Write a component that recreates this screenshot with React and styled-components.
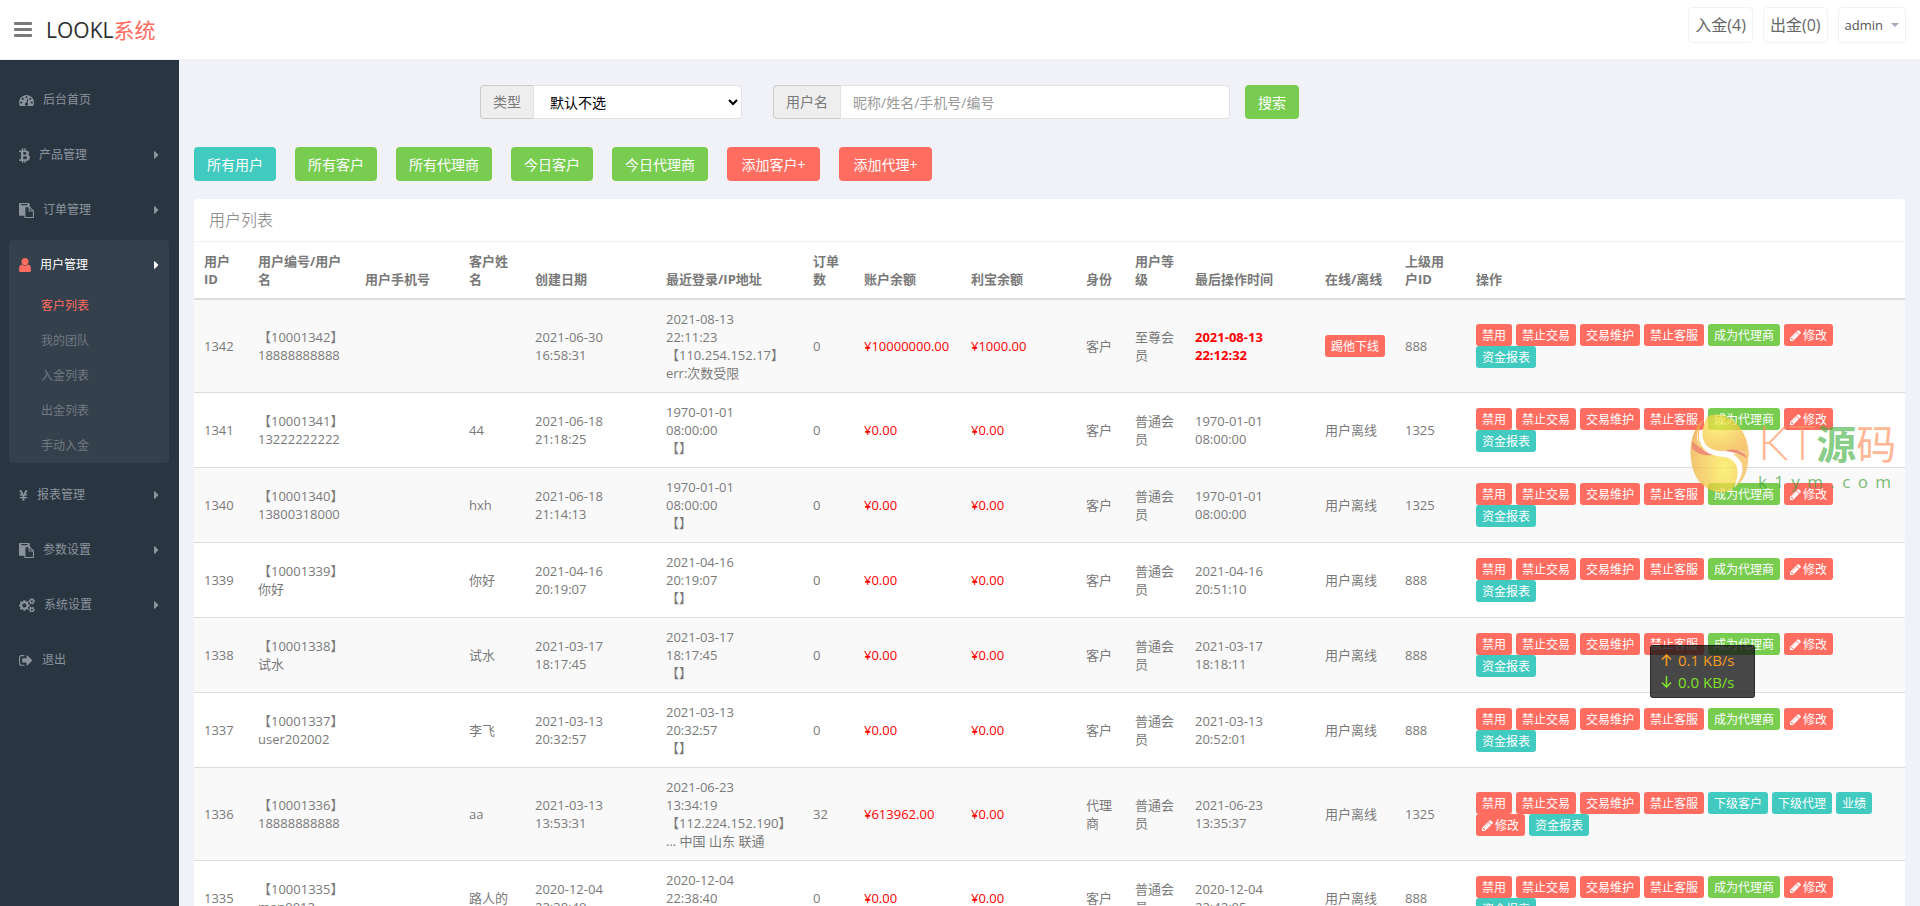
import React from "react";
import styled, { createGlobalStyle, css } from "styled-components";
import { FaBtc, FaCaretRight, FaYenSign } from "react-icons/fa";

const menu = [
  { label: "后台首页", icon: "dashboard" },
  { label: "产品管理", icon: "btc", more: true },
  { label: "订单管理", icon: "paste", more: true },
  {
    label: "用户管理",
    icon: "user",
    more: true,
    children: ["客户列表", "我的团队", "入金列表", "出金列表", "手动入金"],
  },
  { label: "报表管理", icon: "yen", more: true },
  { label: "参数设置", icon: "paste", more: true },
  { label: "系统设置", icon: "cogs", more: true },
  { label: "退出", icon: "signOut" },
];

const filters = [
  { label: "所有用户", tone: "info" },
  { label: "所有客户", tone: "success" },
  { label: "所有代理商", tone: "success" },
  { label: "今日客户", tone: "success" },
  { label: "今日代理商", tone: "success" },
  { label: "添加客户+", tone: "danger", wide: true },
  { label: "添加代理+", tone: "danger", wide: true },
];

const columns = [
  { title: "用户ID", width: 54 },
  { title: "用户编号/用户名", width: 107 },
  { title: "用户手机号", width: 104 },
  { title: "客户姓名", width: 66 },
  { title: "创建日期", width: 131 },
  { title: "最近登录/IP地址", width: 147 },
  { title: "订单数", width: 51 },
  { title: "账户余额", width: 107 },
  { title: "利宝余额", width: 115 },
  { title: "身份", width: 49 },
  { title: "用户等级", width: 60 },
  { title: "最后操作时间", width: 130 },
  { title: "在线/离线", width: 80 },
  { title: "上级用户ID", width: 71 },
  { title: "操作" },
];

const baseActions = [
  { label: "禁用", tone: "danger" },
  { label: "禁止交易", tone: "danger" },
  { label: "交易维护", tone: "danger" },
  { label: "禁止客服", tone: "danger" },
];

const tailActions = [
  { label: "修改", tone: "danger", icon: true },
  { label: "资金报表", tone: "info" },
];

const customerActions = [
  ...baseActions,
  { label: "成为代理商", tone: "success" },
  ...tailActions,
];

const agentActions = [
  ...baseActions,
  { label: "下级客户", tone: "info" },
  { label: "下级代理", tone: "info" },
  { label: "业绩", tone: "info" },
  ...tailActions,
];

const users = [
  {
    id: "1342",
    account: ["【10001342】", "18888888888"],
    name: "",
    created: ["2021-06-30", "16:58:31"],
    login: ["2021-08-13", "22:11:23", "【110.254.152.17】", "err:次数受限"],
    orders: "0",
    balance: "¥10000000.00",
    treasure: "¥1000.00",
    role: "客户",
    level: "至尊会员",
    last: ["2021-08-13", "22:12:32"],
    online: true,
    parent: "888",
  },
  {
    id: "1341",
    account: ["【10001341】", "13222222222"],
    name: "44",
    created: ["2021-06-18", "21:18:25"],
    login: ["1970-01-01", "08:00:00", "【】"],
    orders: "0",
    balance: "¥0.00",
    treasure: "¥0.00",
    role: "客户",
    level: "普通会员",
    last: ["1970-01-01", "08:00:00"],
    parent: "1325",
  },
  {
    id: "1340",
    account: ["【10001340】", "13800318000"],
    name: "hxh",
    created: ["2021-06-18", "21:14:13"],
    login: ["1970-01-01", "08:00:00", "【】"],
    orders: "0",
    balance: "¥0.00",
    treasure: "¥0.00",
    role: "客户",
    level: "普通会员",
    last: ["1970-01-01", "08:00:00"],
    parent: "1325",
  },
  {
    id: "1339",
    account: ["【10001339】", "你好"],
    name: "你好",
    created: ["2021-04-16", "20:19:07"],
    login: ["2021-04-16", "20:19:07", "【】"],
    orders: "0",
    balance: "¥0.00",
    treasure: "¥0.00",
    role: "客户",
    level: "普通会员",
    last: ["2021-04-16", "20:51:10"],
    parent: "888",
  },
  {
    id: "1338",
    account: ["【10001338】", "试水"],
    name: "试水",
    created: ["2021-03-17", "18:17:45"],
    login: ["2021-03-17", "18:17:45", "【】"],
    orders: "0",
    balance: "¥0.00",
    treasure: "¥0.00",
    role: "客户",
    level: "普通会员",
    last: ["2021-03-17", "18:18:11"],
    parent: "888",
  },
  {
    id: "1337",
    account: ["【10001337】", "user202002"],
    name: "李飞",
    created: ["2021-03-13", "20:32:57"],
    login: ["2021-03-13", "20:32:57", "【】"],
    orders: "0",
    balance: "¥0.00",
    treasure: "¥0.00",
    role: "客户",
    level: "普通会员",
    last: ["2021-03-13", "20:52:01"],
    parent: "888",
  },
  {
    id: "1336",
    account: ["【10001336】", "18888888888"],
    name: "aa",
    created: ["2021-03-13", "13:53:31"],
    login: ["2021-06-23", "13:34:19", "【112.224.152.190】", "... 中国 山东 联通"],
    orders: "32",
    balance: "¥613962.00",
    treasure: "¥0.00",
    role: "代理商",
    level: "普通会员",
    last: ["2021-06-23", "13:35:37"],
    parent: "1325",
    agent: true,
  },
  {
    id: "1335",
    account: ["【10001335】", "man0912"],
    name: "路人的",
    created: ["2020-12-04", "22:38:40"],
    login: ["2020-12-04", "22:38:40", "【】"],
    orders: "0",
    balance: "¥0.00",
    treasure: "¥0.00",
    role: "客户",
    level: "普通会员",
    last: ["2020-12-04", "22:42:05"],
    parent: "888",
  },
];

const glyphs = {
  dashboard: {
    box: "0 128 1792 1536",
    width: 15,
    d: "M384 1152q0-53-37.5-90.5t-90.5-37.5-90.5 37.5-37.5 90.5 37.5 90.5 90.5 37.5 90.5-37.5 37.5-90.5zm192-448q0-53-37.5-90.5t-90.5-37.5-90.5 37.5-37.5 90.5 37.5 90.5 90.5 37.5 90.5-37.5 37.5-90.5zm428 481l101-382q6-26-7.5-48.5t-38.5-29.5-48 6.5-30 39.5l-101 382q-60 5-107 43.5t-63 98.5q-20 77 20 146t117 89 146-20 89-117q16-60-6-117t-72-91zm660-33q0-53-37.5-90.5t-90.5-37.5-90.5 37.5-37.5 90.5 37.5 90.5 90.5 37.5 90.5-37.5 37.5-90.5zm-640-640q0-53-37.5-90.5t-90.5-37.5-90.5 37.5-37.5 90.5 37.5 90.5 90.5 37.5 90.5-37.5 37.5-90.5zm448 192q0-53-37.5-90.5t-90.5-37.5-90.5 37.5-37.5 90.5 37.5 90.5 90.5 37.5 90.5-37.5 37.5-90.5zm320 448q0 261-141 483-19 29-54 29h-1402q-35 0-54-29-141-221-141-483 0-182 71-348t191-286 286-191 348-71 348 71 286 191 191 286 71 348z",
  },
  paste: {
    box: "0 0 1792 1792",
    width: 15,
    d: "M768 1664h896v-640h-416q-40 0-68-28t-28-68v-416h-384v1152zm256-1440v-64q0-13-9.5-22.5t-22.5-9.5h-704q-13 0-22.5 9.5t-9.5 22.5v64q0 13 9.5 22.5t22.5 9.5h704q13 0 22.5-9.5t9.5-22.5zm256 672h299l-299-299v299zm512 128v672q0 40-28 68t-68 28h-960q-40 0-68-28t-28-68v-160h-544q-40 0-68-28t-28-68v-1344q0-40 28-68t68-28h1088q40 0 68 28t28 68v328q21 13 36 28l408 408q28 28 48 76t20 88z",
  },
  user: {
    box: "0 128 1280 1536",
    width: 12,
    d: "M1280 1399q0 109-62.5 187t-150.5 78h-854q-88 0-150.5-78t-62.5-187q0-85 8.5-160.5t31.5-152 58.5-131 94-89 134.5-34.5q131 128 313 128t313-128q76 0 134.5 34.5t94 89 58.5 131 31.5 152 8.5 160.5zm-256-887q0 159-112.5 271.5t-271.5 112.5-271.5-112.5-112.5-271.5 112.5-271.5 271.5-112.5 271.5 112.5 112.5 271.5z",
  },
  cogs: {
    box: "0 0 1920 1792",
    width: 16,
    d: "M896 896q0-106-75-181t-181-75-181 75-75 181 75 181 181 75 181-75 75-181zm768 512q0-52-38-90t-90-38-90 38-38 90q0 53 37.5 90.5t90.5 37.5 90.5-37.5 37.5-90.5zm0-1024q0-52-38-90t-90-38-90 38-38 90q0 53 37.5 90.5t90.5 37.5 90.5-37.5 37.5-90.5zm-384 421v185q0 10-7 19.5t-16 10.5l-155 24q-11 35-32 76 34 48 90 115 7 11 7 20 0 12-7 19-23 30-82.5 89.5t-78.5 59.5q-11 0-21-7l-115-90q-37 19-77 31-11 108-23 155-7 24-30 24h-186q-11 0-20-7.5t-10-17.5l-23-153q-34-10-75-31l-118 89q-7 7-20 7-11 0-21-8-144-133-144-160 0-9 7-19 10-14 41-53t47-61q-23-44-35-82l-152-24q-10-1-17-9.5t-7-19.5v-185q0-10 7-19.5t16-10.5l155-24q11-35 32-76-34-48-90-115-7-11-7-20 0-12 7-20 22-30 82-89t79-59q11 0 21 7l115 90q34-18 77-32 11-108 23-154 7-24 30-24h186q11 0 20 7.5t10 17.5l23 153q34 10 75 31l118-89q8-7 20-7 11 0 21 8 144 133 144 160 0 8-7 19-12 16-42 54t-45 60q23 48 34 82l152 23q10 2 17 10.5t7 19.5zm640 533v140q0 16-149 31-12 27-30 52 51 113 51 138 0 4-4 7-122 71-124 71-8 0-46-47t-52-68q-20 2-30 2t-30-2q-14 21-52 68t-46 47q-2 0-124-71-4-3-4-7 0-25 51-138-18-25-30-52-149-15-149-31v-140q0-16 149-31 13-29 30-52-51-113-51-138 0-4 4-7 4-2 35-20t59-34 30-16q8 0 46 46.5t52 67.5q20-2 30-2t30 2q51-71 92-112l6-2q4 0 124 70 4 3 4 7 0 25-51 138 17 23 30 52 149 15 149 31zm0-1024v140q0 16-149 31-12 27-30 52 51 113 51 138 0 4-4 7-122 71-124 71-8 0-46-47t-52-68q-20 2-30 2t-30-2q-14 21-52 68t-46 47q-2 0-124-71-4-3-4-7 0-25 51-138-18-25-30-52-149-15-149-31v-140q0-16 149-31 13-29 30-52-51-113-51-138 0-4 4-7 4-2 35-20t59-34 30-16q8 0 46 46.5t52 67.5q20-2 30-2t30 2q51-71 92-112l6-2q4 0 124 70 4 3 4 7 0 25-51 138 17 23 30 52 149 15 149 31z",
  },
  signOut: {
    box: "0 128 1664 1536",
    width: 14,
    d: "M640 1440q0 4 1 20t.5 26.5-3 23.5-10 19.5-20.5 6.5h-320q-119 0-203.5-84.5t-84.5-203.5v-704q0-119 84.5-203.5t203.5-84.5h320q13 0 22.5 9.5t9.5 22.5q0 4 1 20t.5 26.5-3 23.5-10 19.5-20.5 6.5h-320q-66 0-113 47t-47 113v704q0 66 47 113t113 47h312l11.5 1 11.5 3 8 5.5 7 9 2 13.5zm928-544q0 26-19 45l-544 544q-19 19-45 19t-45-19-19-45v-288h-448q-26 0-45-19t-19-45v-384q0-26 19-45t45-19h448v-288q0-26 19-45t45-19 45 19l544 544q19 19 19 45z",
  },
  pencil: {
    box: "0 128 1536 1536",
    width: 11,
    d: "M363 1536l91-91-235-235-91 91v107h128v128h107zm523-928q0-22-22-22-10 0-17 7l-542 542q-7 7-7 17 0 22 22 22 10 0 17-7l542-542q7-7 7-17zm-54-192l416 416-832 832h-416v-416zm683 96q0 53-37 90l-166 166-416-416 166-165q36-38 90-38 53 0 91 38l235 234q37 39 37 91z",
  },
};

function Glyph({ name }) {
  if (name === "btc") return <BtcIcon />;
  if (name === "yen") return <YenIcon />;
  const { box, width, d } = glyphs[name];
  return (
    <svg viewBox={box} width={width} fill="currentColor" aria-hidden="true">
      <path d={d} />
    </svg>
  );
}

function Lines({ items }) {
  return items.map((line, i) => (
    <React.Fragment key={i}>
      {i > 0 && <br />}
      {line}
    </React.Fragment>
  ));
}

function Sidebar() {
  return (
    <Aside>
      {menu.map((item) => (
        <MenuGroup key={item.label} $open={!!item.children}>
          <MenuLink href="#" $active={!!item.children}>
            <Glyph name={item.icon} />
            <span>{item.label}</span>
            {item.more && <Caret />}
          </MenuLink>
          {item.children &&
            item.children.map((child, i) => (
              <SubLink href="#" key={child} $active={i === 0}>
                {child}
              </SubLink>
            ))}
        </MenuGroup>
      ))}
    </Aside>
  );
}

function UserRow({ user }) {
  const actions = user.agent ? agentActions : customerActions;
  return (
    <tr>
      <Td>{user.id}</Td>
      <Td>
        <Lines items={user.account} />
      </Td>
      <Td />
      <Td>{user.name}</Td>
      <Td>
        <Lines items={user.created} />
      </Td>
      <Td>
        <Lines items={user.login} />
      </Td>
      <Td>{user.orders}</Td>
      <Td $red>{user.balance}</Td>
      <Td $red>{user.treasure}</Td>
      <Td>{user.role}</Td>
      <Td>{user.level}</Td>
      <Td $red={user.online} $bold={user.online}>
        <Lines items={user.last} />
      </Td>
      <Td>
        {user.online ? <SmallButton $tone="danger">踢他下线</SmallButton> : "用户离线"}
      </Td>
      <Td>{user.parent}</Td>
      <Td>
        <Actions>
          {actions.map((action) => (
            <SmallButton key={action.label} $tone={action.tone}>
              {action.icon && <Glyph name="pencil" />}
              {action.label}
            </SmallButton>
          ))}
        </Actions>
      </Td>
    </tr>
  );
}

function Watermark() {
  return (
    <Mark>
      <svg width="60" height="80" viewBox="0 0 60 80" aria-hidden="true">
        <defs>
          <radialGradient id="top" cx="0.35" cy="0.25" r="0.75">
            <stop offset="0" stopColor="#fbee4c" />
            <stop offset="1" stopColor="#f3ad3c" />
          </radialGradient>
          <radialGradient id="bottom" cx="0.7" cy="0.7" r="0.8">
            <stop offset="0" stopColor="#fbee4c" />
            <stop offset="1" stopColor="#f0a53c" />
          </radialGradient>
        </defs>
        <g opacity="0.72">
          <path
            d="M17 4C34-5 59 12 59 44C52 36 46 37 32 38C16 38 6 26 17 4Z"
            fill="url(#top)"
          />
          <path
            d="M12 8C-2 20-3 50 8 67C20 83 38 80 42 76C55 58 50 45 34 43C12 42 4 28 12 8Z"
            fill="url(#bottom)"
          />
          <path d="M54 21C62 43 59 66 44 75C57 57 54 49 43 41C54 40 60 40 54 21Z" fill="#f3bd50" />
          <path d="M2 35C7 42 18 44 28 41C18 40 10 36 2 28Z" fill="#e8663f" />
          <path d="M35 38C43 35 52 36 58 46C51 41 44 39 35 38Z" fill="#e8663f" />
        </g>
        <path
          d="M16 5C7 12 3 28 13 36C22 43 37 39 46 44C55 51 53 64 44 75C51 58 48 47 35 44C19 43 9 37 8 26C7 16 10 9 16 5Z"
          fill="#ffffff"
        />
      </svg>
      <MarkText>
        <MarkTitle>
          <MarkLatin>KT</MarkLatin>
          <span>
            <em>源</em>码
          </span>
        </MarkTitle>
        <MarkDomain>
          {"k1ym.com".split("").map((letter, i) => (
            <span key={i}>{letter}</span>
          ))}
        </MarkDomain>
      </MarkText>
    </Mark>
  );
}

function SpeedArrow({ down }) {
  return (
    <svg width="11" height="12" viewBox="0 0 11 12" fill="none" stroke="currentColor" strokeWidth="1.6">
      {down ? <path d="M5.500 0V11M1 6.500l4.500 4.500 4.500-4.500" /> : <path d="M5.500 12V1M1 5.500l4.500-4.500 4.500 4.500" />}
    </svg>
  );
}

export default function App() {
  return (
    <Page>
      <GlobalStyle />
      <Header>
        <ToggleButton aria-label="菜单">
          <svg width="18" height="15" viewBox="0 0 18 15" fill="currentColor">
            <rect y="0" width="18" height="3" rx="1" />
            <rect y="6" width="18" height="3" rx="1" />
            <rect y="12" width="18" height="3" rx="1" />
          </svg>
        </ToggleButton>
        <Logo href="#">
          LOOKL<span>系统</span>
        </Logo>
        <HeaderNav>
          <HeaderLink href="#">入金(4)</HeaderLink>
          <HeaderLink href="#">出金(0)</HeaderLink>
          <UserButton>
            admin
            <DownCaret />
          </UserButton>
        </HeaderNav>
      </Header>
      <Body>
        <Sidebar />
        <Main>
          <SearchForm onSubmit={(e) => e.preventDefault()}>
            <TypeGroup>
              <Addon htmlFor="type">类型</Addon>
              <Select id="type">
                <option>默认不选</option>
              </Select>
            </TypeGroup>
            <NameGroup>
              <Addon htmlFor="username">用户名</Addon>
              <Input id="username" type="text" placeholder="昵称/姓名/手机号/编号" />
            </NameGroup>
            <Button type="submit" $tone="success">
              搜索
            </Button>
          </SearchForm>
          <Filters>
            {filters.map((item) => (
              <Button key={item.label} $tone={item.tone} $wide={item.wide}>
                {item.label}
              </Button>
            ))}
          </Filters>
          <Panel>
            <PanelTitle>用户列表</PanelTitle>
            <Table>
              <colgroup>
                {columns.map((col) => (
                  <col key={col.title} width={col.width} />
                ))}
              </colgroup>
              <thead>
                <tr>
                  {columns.map((col) => (
                    <Th key={col.title}>{col.title}</Th>
                  ))}
                </tr>
              </thead>
              <tbody>
                {users.map((user) => (
                  <UserRow key={user.id} user={user} />
                ))}
              </tbody>
            </Table>
          </Panel>
        </Main>
      </Body>
      <Watermark />
      <SpeedWidget>
        <Speed $color="#f39c1f">
          <SpeedArrow />
          0.1 KB/s
        </Speed>
        <Speed $color="#7fe02b">
          <SpeedArrow down />
          0.0 KB/s
        </Speed>
      </SpeedWidget>
    </Page>
  );
}

const tones = {
  info: "#41cac0",
  success: "#78cd51",
  danger: "#ff6c60",
};

const GlobalStyle = createGlobalStyle`
  * {
    box-sizing: border-box;
  }

  body {
    margin: 0;
    background: #f1f2f7;
    color: #797979;
    font-family: "Open Sans", "Noto Sans CJK SC", sans-serif;
    font-size: 13px;
    line-height: 18px;
  }

  button,
  input,
  select {
    font-family: inherit;
  }

  a {
    text-decoration: none;
  }
`;

const Page = styled.div`
  display: flex;
  flex-direction: column;
  height: 100vh;
  overflow: hidden;
  position: relative;
`;

const Header = styled.header`
  display: flex;
  align-items: center;
  flex: none;
  height: 60px;
  padding: 0 14px;
  background: #fff;
  border-bottom: 1px solid #f1f2f7;
`;

const ToggleButton = styled.button`
  display: flex;
  padding: 0;
  border: 0;
  background: none;
  color: #797979;
  cursor: pointer;
`;

const Logo = styled.a`
  margin-left: 14px;
  color: #2e2e2e;
  font-size: 21px;
  line-height: 30px;

  span {
    color: #ff6c60;
  }
`;

const HeaderNav = styled.nav`
  display: flex;
  gap: 10px;
  margin-left: auto;
  margin-bottom: 9px;
`;

const headerBox = css`
  display: flex;
  align-items: center;
  height: 36px;
  padding: 0 6px;
  border: 1px solid #f1f2f7;
  border-radius: 4px;
  background: #fff;
`;

const HeaderLink = styled.a`
  ${headerBox}
  color: #666;
  font-size: 16px;
`;

const UserButton = styled.button`
  ${headerBox}
  gap: 8px;
  color: #555;
  font-size: 13px;
  cursor: pointer;
`;

const DownCaret = styled.span`
  border: 4px solid transparent;
  border-top-color: #a4aaba;
  border-bottom: 0;
`;

const Body = styled.div`
  display: flex;
  flex: 1;
  min-height: 0;
`;

const Aside = styled.aside`
  display: flex;
  flex-direction: column;
  flex: none;
  gap: 7px;
  width: 179px;
  padding: 15px 10px 15px 9px;
  background: #2a3542;
`;

const MenuGroup = styled.div`
  border-radius: 4px;
  background: ${(props) => (props.$open ? "#35404d" : "none")};
`;

const MenuLink = styled.a`
  display: flex;
  align-items: center;
  gap: 9px;
  height: 48px;
  padding: 2px 10px 0;
  color: ${(props) => (props.$active ? "#fff" : "#8b949d")};
  font-size: 12px;

  > svg:first-child {
    color: ${(props) => (props.$active ? "#ff6c60" : "inherit")};
  }
`;

const BtcIcon = styled(FaBtc)`
  width: 11px;
  height: 15px;
`;

const YenIcon = styled(FaYenSign)`
  width: 9px;
  height: 13px;
`;

const Caret = styled(FaCaretRight)`
  width: 5px;
  height: 14px;
  margin-left: auto;
`;

const SubLink = styled.a`
  display: block;
  padding-left: 32px;
  color: ${(props) => (props.$active ? "#ff6c60" : "#717a83")};
  font-size: 12px;
  line-height: 35px;
`;

const Main = styled.main`
  flex: 1;
  min-width: 0;
  padding: 25px 15px 0;
  overflow-y: auto;
  scrollbar-width: none;
`;

const SearchForm = styled.form`
  display: flex;
  padding-left: 286px;
`;

const TypeGroup = styled.div`
  display: flex;
  flex: 0 1 262px;
  margin-right: 31px;
`;

const NameGroup = styled.div`
  display: flex;
  flex: 0 1 457px;
  margin-right: 15px;
`;

const Addon = styled.label`
  flex: none;
  height: 34px;
  padding: 0 12px;
  border: 1px solid #ccc;
  border-right: 0;
  border-radius: 4px 0 0 4px;
  background: #eee;
  font-size: 14px;
  line-height: 32px;
`;

const control = css`
  flex: 1;
  min-width: 0;
  height: 34px;
  border: 1px solid #e2e2e4;
  border-radius: 0 4px 4px 0;
  background: #fff;
  font-size: 14px;
`;

const Select = styled.select`
  ${control}
  padding: 0 0 0 12px;
  color: #000;
`;

const Input = styled.input`
  ${control}
  padding: 0 12px;
  color: #555;

  &::placeholder {
    color: #999;
  }
`;

const Button = styled.button`
  height: 34px;
  min-width: ${(props) => (props.$wide ? "93px" : "0")};
  padding: 0 13px;
  border: 0;
  border-radius: 4px;
  background: ${(props) => tones[props.$tone]};
  color: #fff;
  font-size: 14px;
  white-space: nowrap;
  cursor: pointer;
`;

const Filters = styled.div`
  display: flex;
  flex-wrap: wrap;
  gap: 19px;
  margin: 28px 0 18px;
`;

const Panel = styled.section`
  border-radius: 4px;
  background: #fff;
`;

const PanelTitle = styled.h2`
  margin: 0;
  padding: 10px 15px;
  border-bottom: 1px solid #eff2f7;
  font-size: 16px;
  font-weight: 300;
  line-height: 22px;
`;

const Table = styled.table`
  width: 100%;
  table-layout: fixed;
  border-collapse: separate;
  border-spacing: 0;

  tbody tr:nth-child(odd) {
    background: #f9f9f9;
  }
`;

const Th = styled.th`
  padding: 10px;
  border-bottom: 2px solid #ddd;
  text-align: left;
  vertical-align: bottom;
`;

const Td = styled.td`
  padding: 10px;
  border-bottom: 1px solid #ddd;
  color: ${(props) => (props.$red ? "red" : "inherit")};
  font-weight: ${(props) => (props.$bold ? 700 : 400)};

  &:last-child {
    padding-right: 20px;
  }
`;

const Actions = styled.div`
  display: flex;
  flex-wrap: wrap;
  gap: 0 4px;
`;

const SmallButton = styled.button`
  display: flex;
  align-items: center;
  gap: 2px;
  height: 22px;
  padding: 0 6px;
  border: 0;
  border-radius: 3px;
  background: ${(props) => tones[props.$tone]};
  color: #fff;
  font-size: 12px;
  white-space: nowrap;
  cursor: pointer;
`;

const Mark = styled.div`
  position: absolute;
  top: 413px;
  right: 29px;
  display: flex;
  gap: 8px;
  pointer-events: none;
`;

const MarkText = styled.div`
  display: flex;
  flex-direction: column;
  width: 133px;
`;

const MarkTitle = styled.div`
  display: flex;
  justify-content: space-between;
  color: rgba(255, 150, 100, 0.7);
  font-family: "Noto Sans CJK SC", sans-serif;
  font-size: 40px;
  line-height: 58px;
  white-space: nowrap;

  em {
    color: rgba(65, 175, 65, 0.65);
    font-style: normal;
    font-weight: 700;
  }
`;

const MarkLatin = styled.span`
  font-family: Lato, "Open Sans", sans-serif;
  font-size: 48px;
  font-weight: 300;
`;

const MarkDomain = styled.div`
  display: flex;
  justify-content: space-between;
  color: rgba(60, 160, 50, 0.7);
  font-size: 17px;
  line-height: 22px;
`;

const SpeedWidget = styled.div`
  position: absolute;
  top: 645px;
  right: 165px;
  width: 105px;
  padding: 3px 10px 4px;
  border: 1px solid rgba(0, 0, 0, 0.4);
  border-radius: 3px;
  background: rgba(20, 20, 20, 0.78);
`;

const Speed = styled.div`
  display: flex;
  align-items: center;
  gap: 6px;
  color: ${(props) => props.$color};
  font-size: 15px;
  line-height: 22px;
  white-space: nowrap;
`;
